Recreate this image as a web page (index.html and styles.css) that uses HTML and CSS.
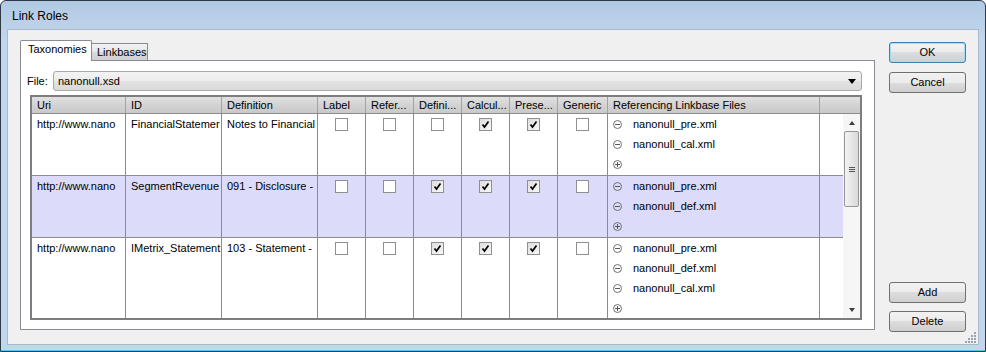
FILE: index.html
```html
<!DOCTYPE html>
<html>
	<head>
		<meta charset="UTF-8">
		<title>Link Roles</title>
		<link rel="stylesheet" href="styles.css">
	</head>
	<body>
		<div class="window">
			<div class="titlebar">Link Roles</div>
			<div class="client">
				<div class="main">
					<div class="tabs">
						<div class="tab active">Taxonomies</div>
						<div class="tab">Linkbases</div>
					</div>
					<div class="panel">
						<div class="file-row">
							<label>File:</label>
							<div class="combo"><span>nanonull.xsd</span><i class="drop"></i></div>
						</div>
						<div class="grid">
							<div class="head cols">
								<span>Uri</span><span>ID</span><span>Definition</span><span>Label</span><span>Refer...</span><span>Defini...</span><span>Calcul...</span><span>Prese...</span><span>Generic</span><span>Referencing Linkbase Files</span><span></span>
							</div>
							<div class="body">
								<div class="rows">
									<!-- row 1 -->
									<div class="row cols">
										<div class="cell">http://www.nano</div>
										<div class="cell">FinancialStatemer</div>
										<div class="cell">Notes to Financial</div>
										<div class="cell chk"><span class="cb"></span></div>
										<div class="cell chk"><span class="cb"></span></div>
										<div class="cell chk"><span class="cb"></span></div>
										<div class="cell chk"><span class="cb on"><svg width="11" height="11"><path d="M2.5 5.5 L4.5 8 L8.5 2.5" fill="none" stroke="#000" stroke-width="1.7"/></svg></span></div>
										<div class="cell chk"><span class="cb on"><svg width="11" height="11"><path d="M2.5 5.5 L4.5 8 L8.5 2.5" fill="none" stroke="#000" stroke-width="1.7"/></svg></span></div>
										<div class="cell chk"><span class="cb"></span></div>
										<div class="cell files">
											<div class="f"><i class="ic"></i>nanonull_pre.xml</div>
											<div class="f"><i class="ic"></i>nanonull_cal.xml</div>
											<div class="f"><i class="ic plus"></i></div>
										</div>
										<div class="cell last"></div>
									</div>
									<!-- row 2 -->
									<div class="row cols sel">
										<div class="cell">http://www.nano</div>
										<div class="cell">SegmentRevenue</div>
										<div class="cell">091 - Disclosure -</div>
										<div class="cell chk"><span class="cb"></span></div>
										<div class="cell chk"><span class="cb"></span></div>
										<div class="cell chk"><span class="cb on"><svg width="11" height="11"><path d="M2.5 5.5 L4.5 8 L8.5 2.5" fill="none" stroke="#000" stroke-width="1.7"/></svg></span></div>
										<div class="cell chk"><span class="cb on"><svg width="11" height="11"><path d="M2.5 5.5 L4.5 8 L8.5 2.5" fill="none" stroke="#000" stroke-width="1.7"/></svg></span></div>
										<div class="cell chk"><span class="cb on"><svg width="11" height="11"><path d="M2.5 5.5 L4.5 8 L8.5 2.5" fill="none" stroke="#000" stroke-width="1.7"/></svg></span></div>
										<div class="cell chk"><span class="cb"></span></div>
										<div class="cell files">
											<div class="f"><i class="ic"></i>nanonull_pre.xml</div>
											<div class="f"><i class="ic"></i>nanonull_def.xml</div>
											<div class="f"><i class="ic plus"></i></div>
										</div>
										<div class="cell last"></div>
									</div>
									<!-- row 3 -->
									<div class="row cols tall">
										<div class="cell">http://www.nano</div>
										<div class="cell">IMetrix_Statement</div>
										<div class="cell">103 - Statement -</div>
										<div class="cell chk"><span class="cb"></span></div>
										<div class="cell chk"><span class="cb"></span></div>
										<div class="cell chk"><span class="cb on"><svg width="11" height="11"><path d="M2.5 5.5 L4.5 8 L8.5 2.5" fill="none" stroke="#000" stroke-width="1.7"/></svg></span></div>
										<div class="cell chk"><span class="cb on"><svg width="11" height="11"><path d="M2.5 5.5 L4.5 8 L8.5 2.5" fill="none" stroke="#000" stroke-width="1.7"/></svg></span></div>
										<div class="cell chk"><span class="cb on"><svg width="11" height="11"><path d="M2.5 5.5 L4.5 8 L8.5 2.5" fill="none" stroke="#000" stroke-width="1.7"/></svg></span></div>
										<div class="cell chk"><span class="cb"></span></div>
										<div class="cell files">
											<div class="f"><i class="ic"></i>nanonull_pre.xml</div>
											<div class="f"><i class="ic"></i>nanonull_def.xml</div>
											<div class="f"><i class="ic"></i>nanonull_cal.xml</div>
											<div class="f"><i class="ic plus"></i></div>
										</div>
										<div class="cell last"></div>
									</div>
								</div>
								<div class="scroll">
									<div class="arrow"><i class="up"></i></div>
									<div class="thumb"><i class="grip"></i></div>
									<div class="arrow end"><i class="down"></i></div>
								</div>
							</div>
						</div>
					</div>
				</div>
				<div class="side">
					<div class="btn default">OK</div>
					<div class="btn">Cancel</div>
					<div class="btn push">Add</div>
					<div class="btn">Delete</div>
				</div>
				<svg class="sizegrip" width="12" height="12">
					<g fill="#9aa3ad">
						<rect x="9" y="1" width="2" height="2"/>
						<rect x="6" y="4" width="2" height="2"/><rect x="9" y="4" width="2" height="2"/>
						<rect x="3" y="7" width="2" height="2"/><rect x="6" y="7" width="2" height="2"/><rect x="9" y="7" width="2" height="2"/>
						<rect x="0" y="10" width="2" height="2"/><rect x="3" y="10" width="2" height="2"/><rect x="6" y="10" width="2" height="2"/><rect x="9" y="10" width="2" height="2"/>
					</g>
				</svg>
			</div>
		</div>
	</body>
</html>
```
FILE: styles.css
```css
*{margin:0;padding:0;box-sizing:border-box;}
body{background:#fff;font-family:"Liberation Sans",Arial,sans-serif;font-size:11px;color:#000;}

/* window frame */
.window{width:986px;height:352px;border:1px solid #2f3a46;border-radius:6px 6px 0 0;
	background:linear-gradient(#b1c9e4,#c3d7ec 40px,#c3d7ec);
	padding:0 7px 7px;display:flex;flex-direction:column;
	box-shadow:inset 0 -1px 0 #5cc4e6;}
.titlebar{height:29px;line-height:31px;padding-left:4px;font-size:12px;}
.client{position:relative;height:314px;background:#f0f0f0;display:flex;padding:10px 12px 0;outline:1px solid #a5b9d0;}

/* tabs */
.main{width:855px;display:flex;flex-direction:column;}
.tabs{display:flex;align-items:flex-end;height:20px;}
.tab{height:17px;width:57px;border:1px solid #898c95;border-bottom:none;padding-left:5px;line-height:17px;
	background:linear-gradient(#f3f3f3,#e6e6e6 50%,#dadada 50%,#d0d0d0);margin-left:-1px;}
.tab.active{height:21px;width:72px;margin:0 0 -1px 0;background:#fff;position:relative;z-index:1;line-height:17px;padding-left:7px;border-radius:2px 2px 0 0;}
.panel{height:270px;border:1px solid #898c95;background:#fff;padding-top:10px;}

/* file combo */
.file-row{display:flex;align-items:center;height:20px;padding-left:6px;}
.file-row label{width:26px;}
.combo{width:809px;height:20px;border:1px solid #a9a9a9;border-radius:3px;display:flex;align-items:center;padding-left:4px;
	background:linear-gradient(#f3f3f3,#ececec 50%,#e2e2e2 50%,#dbdbdb);}
.combo span{flex:1;}
.drop{width:0;height:0;border-left:4px solid transparent;border-right:4px solid transparent;border-top:5px solid #000;margin-right:5px;}

/* grid */
.grid{margin:4px 0 0 9px;width:832px;height:225px;border:2px solid #7d7d7d;display:flex;flex-direction:column;overflow:hidden;}
.cols{display:grid;grid-template-columns:94px 96px 96px 48px 48px 48px 48px 48px 50px 212px 1fr;}
.head{height:17px;background:linear-gradient(#e1e1e1,#d3d3d3 50%,#c9c9c9);border-bottom:1px solid #8c8c8c;}
.head span{border-right:1px solid #a3a3a3;padding-left:5px;line-height:17px;white-space:nowrap;overflow:hidden;}
.head span:last-child{border-right:none;}
.body{display:flex;flex:1;min-height:0;}
.rows{flex:1;overflow:hidden;}
.row{height:62px;border-bottom:1px solid #8c8c8c;}
.row.sel{background:#dcdcfa;}
.row.tall{height:81px;border-bottom:none;}
.cell{border-right:1px solid #8c8c8c;padding:0 4px 0 5px;line-height:20px;white-space:nowrap;overflow:hidden;}
.cell.last{border-right:none;}
.cell.chk{display:flex;justify-content:center;align-items:flex-start;padding:4px 0 0;}
.cb{width:13px;height:13px;border:1px solid #8e8f8f;background:#fff;display:block;}
.cb.on{background:linear-gradient(135deg,#dedede,#f8f8f8);}
.cb svg{display:block;}
.f{display:flex;align-items:center;height:20px;}
.ic{width:9px;height:9px;border:1px solid #6f6f6f;border-radius:50%;position:relative;margin-right:11px;display:block;}
.ic::before{content:"";position:absolute;left:1px;top:3px;width:5px;height:1px;background:#555;}
.ic.plus::after{content:"";position:absolute;left:3px;top:1px;width:1px;height:5px;background:#555;}

/* scrollbar */
.scroll{width:17px;background:#f6f6f6;display:flex;flex-direction:column;align-items:center;}
.arrow{height:17px;width:17px;display:flex;align-items:center;justify-content:center;}
.arrow.end{margin-top:auto;}
.up{border-left:3px solid transparent;border-right:3px solid transparent;border-bottom:4px solid #3c3c3c;}
.down{border-left:3px solid transparent;border-right:3px solid transparent;border-top:4px solid #3c3c3c;}
.thumb{width:15px;height:76px;border:1px solid #979797;border-radius:2px;display:flex;align-items:center;justify-content:center;
	background:linear-gradient(to right,#f3f3f3,#e6e6e6 50%,#d9d9d9);}
.grip{width:6px;height:5px;display:block;background:repeating-linear-gradient(#555 0 1px,transparent 1px 2px);}

/* buttons */
.side{margin-left:14px;width:77px;display:flex;flex-direction:column;padding:2px 0 12px;}
.btn{height:21px;border:1px solid #707070;border-radius:3px;text-align:center;line-height:19px;margin-bottom:9px;
	background:linear-gradient(#f2f2f2,#ebebeb 50%,#dddddd 50%,#cfcfcf);}
.btn.default{border-color:#3c7fb1;box-shadow:inset 0 0 0 1px #a2dcf6;}
.btn.push{margin-top:auto;margin-bottom:8px;}
.btn:last-child{margin-bottom:0;}
.sizegrip{position:absolute;right:1px;bottom:1px;}
```
